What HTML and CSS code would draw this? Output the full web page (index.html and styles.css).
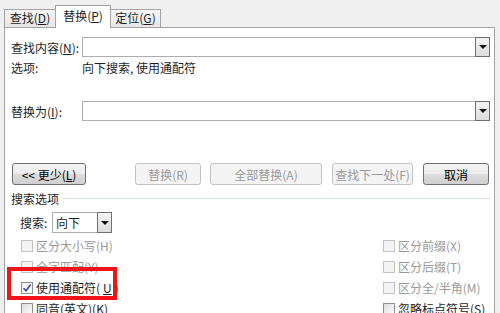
FILE: index.html
```html
<!DOCTYPE html>
<html lang="zh-CN">
  <head>
    <meta charset="UTF-8" />
    <title>查找和替换</title>
    <link rel="stylesheet" href="styles.css">
  </head>
  <body>
    <div class="tabs">
      <div class="tab first">查找(<u>D</u>)</div>
      <div class="tab active">替换(<u>P</u>)</div>
      <div class="tab last">定位(<u>G</u>)</div>
    </div>

    <div class="panel">
      <div class="field-row">
        <span class="label">查找内容(<u>N</u>):</span>
        <div class="combo">
          <div class="combo-input"></div>
          <div class="combo-btn"><span class="arrow"></span></div>
        </div>
      </div>

      <div class="text-row">
        <span class="label">选项:</span>
        <span>向下搜索, 使用通配符</span>
      </div>

      <div class="field-row replace">
        <span class="label">替换为(<u>I</u>):</span>
        <div class="combo">
          <div class="combo-input"></div>
          <div class="combo-btn"><span class="arrow"></span></div>
        </div>
      </div>

      <div class="buttons">
        <button class="btn less">&lt;&lt; 更少(<u>L</u>)</button>
        <button class="btn disabled replace-one">替换(R)</button>
        <button class="btn disabled replace-all">全部替换(A)</button>
        <button class="btn disabled find-next">查找下一处(F)</button>
        <button class="btn cancel">取消</button>
      </div>

      <div class="group-title">
        <span>搜索选项</span>
        <span class="rule"></span>
      </div>

      <div class="search-row">
        <span class="search-label">搜索:</span>
        <div class="select">
          <span class="select-text">向下</span>
          <div class="combo-btn"><span class="arrow"></span></div>
        </div>
      </div>

      <div class="checks">
        <label class="check disabled"><span class="box"></span>区分大小写(H)</label>
        <label class="check disabled"><span class="box"></span>区分前缀(X)</label>
        <label class="check disabled"><span class="box"></span>全字匹配(Y)</label>
        <label class="check disabled"><span class="box"></span>区分后缀(T)</label>
        <label class="check">
          <span class="box checked">
            <svg width="10" height="10" viewBox="0 0 10 10"><path d="M1.5 5.2 L4 7.8 L8.6 1.6" fill="none" stroke="#3a4d9a" stroke-width="1.6"/></svg>
          </span>使用通配符(<u>U</u>)
        </label>
        <label class="check disabled"><span class="box"></span>区分全/半角(M)</label>
        <label class="check"><span class="box"></span>同音(英文)(K)</label>
        <label class="check"><span class="box"></span>忽略标点符号(S)</label>
      </div>
    </div>

    <div class="highlight"></div>
  </body>
</html>
```

FILE: styles.css
```css
* {
  box-sizing: border-box;
}

body {
  margin: 0;
  width: 500px;
  height: 313px;
  overflow: hidden;
  background: #f0f0f0;
  font-family: "Noto Sans CJK SC", "Microsoft YaHei", sans-serif;
  font-size: 12px;
  color: #1e1e1e;
}

u {
  text-decoration: underline;
  text-underline-offset: 1px;
}

/* tabs */
.tabs {
  display: flex;
  align-items: flex-end;
  height: 27px;
  padding-left: 4px;
}

.tab {
  height: 18px;
  line-height: 16px;
  border: 1px solid #a3a3a3;
  border-bottom: none;
  background: linear-gradient(#f7f7f7, #e7e7e7);
  text-align: center;
}

.tab.first {
  width: 51px;
  border-right: none;
}

.tab.active {
  width: 56px;
  height: 23px;
  line-height: 19px;
  margin-bottom: -1px;
  background: #fff;
  position: relative;
  z-index: 1;
}

.tab.last {
  width: 50px;
  border-left: none;
}

/* panel */
.panel {
  margin-left: 4px;
  width: 491px;
  height: 286px;
  background: #fff;
  border: 1px solid #a3a3a3;
  border-bottom: none;
  padding: 9px 4px 0 6px;
}

.label {
  width: 71px;
  flex-shrink: 0;
}

.field-row {
  display: flex;
  align-items: center;
  height: 20px;
}

.field-row.replace {
  margin-top: 25px;
}

.text-row {
  display: flex;
  margin-top: 3px;
  height: 16px;
  line-height: 16px;
}

.combo {
  flex: 1;
  display: flex;
  height: 20px;
}

.combo-input {
  flex: 1;
  border: 1px solid #abadb3;
  border-right: none;
}

.combo-btn {
  width: 15px;
  height: 100%;
  border: 1px solid #6f6f6f;
  background: linear-gradient(#f4f4f4, #dcdcdc);
  display: flex;
  align-items: center;
  justify-content: center;
}

.arrow {
  width: 0;
  height: 0;
  border-left: 4px solid transparent;
  border-right: 4px solid transparent;
  border-top: 4px solid #111;
}

/* buttons */
.buttons {
  display: flex;
  margin-top: 42px;
  height: 22px;
}

.btn {
  height: 22px;
  padding: 0;
  font-family: inherit;
  font-size: 12px;
  border-radius: 3px;
  border: 1px solid #707070;
  background: linear-gradient(#f3f3f3 0%, #ebebeb 50%, #dddddd 51%, #cfcfcf 100%);
  color: #000;
}

.btn.disabled {
  border-color: #c3c3c3;
  background: #f4f4f4;
  color: #9a9a9a;
}

.less {
  margin-left: 1px;
  width: 74px;
}

.replace-one {
  margin-left: 49px;
  width: 66px;
}

.replace-all {
  margin-left: 9px;
  width: 112px;
}

.find-next {
  margin-left: 10px;
  width: 81px;
}

.cancel {
  margin-left: 10px;
  width: 66px;
}

/* search options */
.group-title {
  display: flex;
  align-items: center;
  margin-top: 5px;
  height: 16px;
}

.rule {
  flex: 1;
  height: 1px;
  margin-left: 4px;
  background: #d5dfe5;
}

.search-row {
  display: flex;
  align-items: center;
  margin-top: 6px;
  height: 21px;
  padding-left: 9px;
}

.search-label {
  width: 32px;
}

.select {
  display: flex;
  align-items: center;
  width: 60px;
  height: 21px;
  border: 1px solid #abadb3;
}

.select-text {
  flex: 1;
  padding-left: 3px;
}

.select .combo-btn {
  margin-right: -1px;
  height: 21px;
}

.checks {
  display: grid;
  grid-template-columns: 362px 1fr;
  grid-auto-rows: 21px;
  margin-top: 2px;
  padding-left: 10px;
}

.check {
  display: flex;
  align-items: center;
  gap: 3px;
}

.check.disabled {
  color: #9a9a9a;
}

.box {
  width: 12px;
  height: 12px;
  border: 1px solid #8e8f8f;
  background: linear-gradient(135deg, #dedede, #fbfbfb);
  display: flex;
  align-items: center;
  justify-content: center;
}

.check.disabled .box {
  border-color: #c2c2c2;
  background: #f4f4f4;
}

.box.checked {
  background: #f6f6f6;
}

/* annotation */
.highlight {
  position: absolute;
  left: 7px;
  top: 267px;
  width: 110px;
  height: 33px;
  border: 4px solid #f0141a;
}
```
